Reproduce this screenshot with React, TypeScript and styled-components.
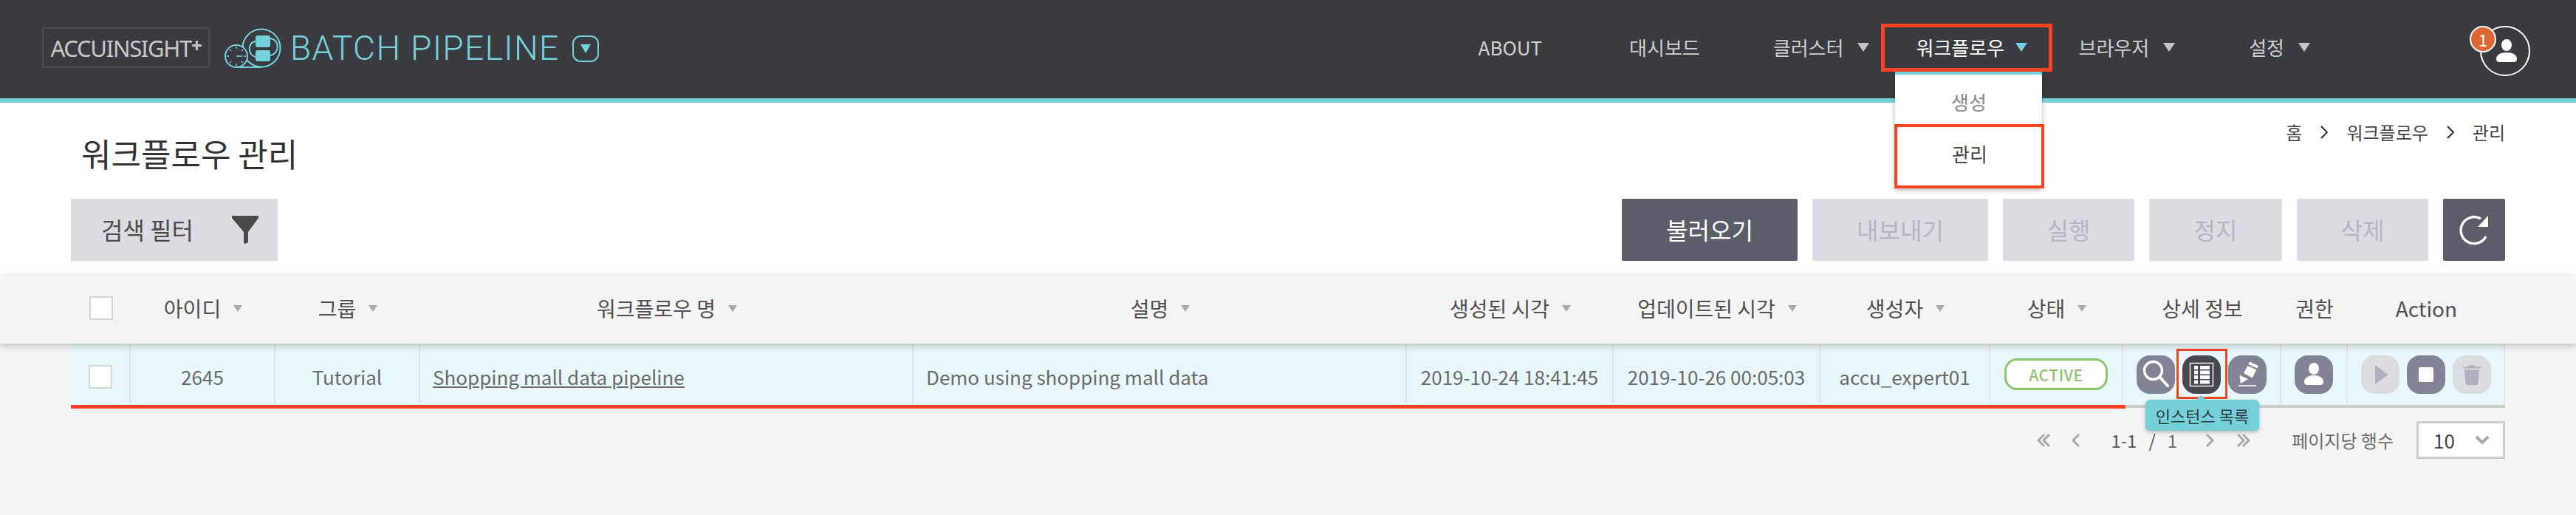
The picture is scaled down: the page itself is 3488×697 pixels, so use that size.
import styled, { createGlobalStyle } from 'styled-components';

const GlobalStyle = createGlobalStyle`
    html, body {
        margin: 0;
        padding: 0;
        background: #f4f4f4;
        overflow: hidden;
    }
    * {
        box-sizing: border-box;
    }
`;

const FONT = `"Noto Sans CJK KR", "Noto Sans", sans-serif`;
const RED = '#f64421';
const TEAL = '#76d2da';
const COLUMNS = '81px 196px 196px 668px 668px 280px 280px 230px 180px 214px 90px 213px';

const Page = styled.div`
    width: 3488px;
    height: 697px;
    overflow: hidden;
    background: #f4f4f4;
    font-family: ${FONT};
`;

const TopBar = styled.header`
    height: 139px;
    display: flex;
    align-items: center;
    padding: 0 62px 0 57px;
    background: #3a3b40;
    border-bottom: 6px solid ${TEAL};
`;

const BrandBox = styled.div`
    width: 227px;
    height: 55px;
    margin-top: -4px;
    display: flex;
    align-items: center;
    justify-content: center;
    border: 2px solid #4a4c53;
    border-radius: 3px;
    color: #c8c8c8;
    font-family: "Noto Sans", sans-serif;
    font-size: 31px;
    letter-spacing: -1.3px;
    white-space: nowrap;
    sup {
        font-size: 26px;
        font-weight: 700;
        line-height: 0;
        position: relative;
        top: -4px;
        vertical-align: baseline;
    }
`;

const LogoMark = styled.svg`
    width: 78px;
    height: 54px;
    margin: -4px 0 0 20px;
    flex: none;
`;

const ProductName = styled.div`
    margin: -4px 0 0 11px;
    color: ${TEAL};
    font-family: Roboto, sans-serif;
    font-weight: 300;
    font-size: 46px;
    letter-spacing: 1.4px;
    line-height: 54px;
    white-space: nowrap;
`;

const ProductToggle = styled.div`
    width: 36px;
    height: 36px;
    margin: -2px 0 0 17px;
    display: flex;
    align-items: center;
    justify-content: center;
    border: 2px solid ${TEAL};
    border-radius: 11px;
`;

const Caret = styled.span<{ $color: string; $w: number; $h: number }>`
    display: inline-block;
    flex: none;
    width: 0;
    height: 0;
    border-left: ${(p) => p.$w / 2}px solid transparent;
    border-right: ${(p) => p.$w / 2}px solid transparent;
    border-top: ${(p) => p.$h}px solid ${(p) => p.$color};
`;

const Nav = styled.nav`
    margin: -4px 0 0 auto;
    display: flex;
    align-items: center;
`;

const NavItem = styled.div<{ $gap: number }>`
    margin-left: ${(p) => p.$gap}px;
    padding-bottom: 2px;
    display: flex;
    align-items: center;
    gap: 19px;
    color: #cfcfcf;
    font-size: 26px;
    line-height: 40px;
    white-space: nowrap;
`;

const ActiveNavItem = styled(NavItem)`
    position: relative;
    width: 232px;
    height: 65px;
    padding-left: 42px;
    gap: 15px;
    border: 5px solid ${RED};
    color: #ffffff;
`;

const Menu = styled.div`
    position: absolute;
    top: 60px;
    left: 14px;
    width: 199px;
    z-index: 5;
    background: #ffffff;
    border-top: 4px solid ${TEAL};
    box-shadow: 0 2px 6px rgba(0, 0, 0, 0.3);
    text-align: center;
    font-size: 26px;
`;

const MenuItem = styled.div`
    height: 67px;
    padding-top: 6px;
    display: flex;
    align-items: center;
    justify-content: center;
    color: #8a8a8a;
`;

const MenuItemMarked = styled.div`
    height: 87px;
    margin: 0 -3px 0 -1px;
    padding-bottom: 8px;
    display: flex;
    align-items: center;
    justify-content: center;
    border: 4px solid ${RED};
    background: #ffffff;
    color: #444444;
`;

const Avatar = styled.div`
    position: relative;
    width: 68px;
    height: 68px;
    margin: 4px 0 0 230px;
    border: 2px solid #ffffff;
    border-radius: 50%;
    svg {
        display: block;
        width: 64px;
        height: 64px;
    }
`;

const Badge = styled.span`
    position: absolute;
    top: -2px;
    left: -16px;
    width: 36px;
    height: 36px;
    display: flex;
    align-items: center;
    justify-content: center;
    border: 2px solid #ffffff;
    border-radius: 50%;
    background: #dd6733;
    color: #ffffff;
    font-size: 22px;
    line-height: 1;
`;

const PageHead = styled.section`
    height: 233px;
    padding: 0 96px;
    background: #ffffff;
`;

const TitleRow = styled.div`
    height: 130px;
    display: flex;
    justify-content: space-between;
    align-items: flex-start;
`;

const Title = styled.h1`
    margin: 41px 0 0 14px;
    color: #333333;
    font-size: 44px;
    font-weight: 400;
    line-height: 54px;
`;

const Breadcrumb = styled.div`
    margin: 22px 0 0 0;
    display: flex;
    align-items: center;
    gap: 24px;
    color: #444444;
    font-size: 24px;
    line-height: 36px;
    svg {
        width: 12px;
        height: 20px;
    }
`;

const Toolbar = styled.div`
    height: 84px;
    display: flex;
    justify-content: space-between;
`;

const FilterButton = styled.button`
    width: 280px;
    height: 84px;
    padding: 0 25px 3px 41px;
    display: flex;
    align-items: center;
    justify-content: space-between;
    border: none;
    background: #dcdce2;
    color: #4c4c4c;
    font-family: ${FONT};
    font-size: 32px;
    svg {
        width: 38px;
        height: 40px;
        margin-top: 3px;
    }
`;

const ActionGroup = styled.div`
    display: flex;
    gap: 20px;
`;

const ToolButton = styled.button<{ $w: number; $on?: boolean }>`
    width: ${(p) => p.$w}px;
    height: 84px;
    padding: 0 0 3px;
    display: flex;
    align-items: center;
    justify-content: center;
    border: none;
    border-radius: 2px;
    background: ${(p) => (p.$on ? '#5b5e69' : '#dcdce2')};
    color: ${(p) => (p.$on ? '#ffffff' : '#b4b7c2')};
    font-family: ${FONT};
    font-size: 32px;
    svg {
        width: 44px;
        height: 44px;
        margin-top: 3px;
    }
`;

const TableHead = styled.div`
    position: relative;
    z-index: 1;
    height: 93px;
    padding: 0 96px;
    display: grid;
    grid-template-columns: ${COLUMNS};
    background: #f4f4f4;
    box-shadow: 0 3px 9px rgba(0, 0, 0, 0.22);
`;

const HeadCell = styled.div`
    padding-bottom: 3px;
    display: flex;
    align-items: center;
    justify-content: center;
    gap: 17px;
    color: #505050;
    font-size: 28px;
    white-space: nowrap;
`;

const Check = styled.span`
    display: block;
    width: 32px;
    height: 32px;
    background: #ffffff;
    border: 2px solid #d4d4d4;
`;

const Row = styled.div`
    position: relative;
    height: 87px;
    margin: 0 96px;
    display: grid;
    grid-template-columns: ${COLUMNS};
    background: #e8f7f9;
    border-bottom: 4px solid #cccccc;
`;

const RowMark = styled.div`
    position: absolute;
    left: 0;
    top: 83px;
    width: 2782px;
    height: 5px;
    background: ${RED};
`;

const Cell = styled.div<{ $left?: boolean }>`
    display: flex;
    align-items: center;
    justify-content: ${(p) => (p.$left ? 'flex-start' : 'center')};
    gap: 10px;
    padding: 6px 0 0 ${(p) => (p.$left ? '17px' : '0')};
    border-right: 2px solid #e0e5e7;
    color: #6a6a6a;
    font-size: 26px;
    white-space: nowrap;
    &:last-child {
        border-right: none;
    }
`;

const RowLink = styled.a`
    color: #6a6a6a;
    text-decoration: underline;
`;

const StatusPill = styled.span`
    width: 140px;
    height: 43px;
    margin-top: -6px;
    display: flex;
    align-items: center;
    justify-content: center;
    border: 3px solid #8cc66c;
    border-radius: 17px;
    background: #ffffff;
    color: #8cc66c;
    font-size: 21px;
    font-weight: 500;
    letter-spacing: 0.5px;
`;

const IconButton = styled.span<{ $tone: 'normal' | 'active' | 'off' }>`
    position: relative;
    width: 52px;
    height: 52px;
    margin-top: -6px;
    border-radius: 18px;
    background: ${(p) => (p.$tone === 'active' ? '#47484f' : p.$tone === 'off' ? '#dcdde3' : '#808494')};
    svg {
        display: block;
        width: 52px;
        height: 52px;
    }
`;

const IconMark = styled.span`
    position: absolute;
    top: -9px;
    left: -8px;
    width: 69px;
    height: 68px;
    border: 3px solid ${RED};
`;

const Tooltip = styled.div`
    position: absolute;
    z-index: 3;
    top: 60px;
    left: -50px;
    width: 154px;
    height: 42px;
    display: flex;
    align-items: center;
    justify-content: center;
    border-radius: 6px;
    background: #76d0da;
    box-shadow: 0 2px 5px rgba(0, 0, 0, 0.25);
    color: #2f3a3c;
    font-size: 22px;
    &::before {
        content: '';
        position: absolute;
        top: -6px;
        left: 68px;
        border-left: 7px solid transparent;
        border-right: 7px solid transparent;
        border-bottom: 6px solid #76d0da;
    }
`;

const Pager = styled.div`
    height: 51px;
    margin: 18px 96px 0 0;
    display: flex;
    align-items: center;
    justify-content: flex-end;
    color: #555555;
    font-size: 24px;
    line-height: 1;
`;

const PagerArrow = styled.svg<{ $gap: number }>`
    width: 18px;
    height: 20px;
    margin-left: ${(p) => p.$gap}px;
    flex: none;
`;

const PagerText = styled.span<{ $gap: number; $soft?: boolean }>`
    margin-left: ${(p) => p.$gap}px;
    color: ${(p) => (p.$soft ? '#6c6c6c' : '#555555')};
    white-space: nowrap;
`;

const PageLabel = styled.span`
    margin-left: 56px;
    color: #6c6c6c;
    font-size: 24px;
    white-space: nowrap;
`;

const PageSize = styled.div`
    width: 120px;
    height: 51px;
    margin-left: 31px;
    padding: 0 18px 0 20px;
    display: flex;
    align-items: center;
    justify-content: space-between;
    border: 3px solid #cccccc;
    background: #ffffff;
    color: #444444;
    font-size: 26px;
    svg {
        width: 20px;
        height: 14px;
    }
`;

const Chevron = () => (
    <svg viewBox="0 0 12 20">
        <path d="M2 2l8 8-8 8" fill="none" stroke="#222" strokeWidth="1.8" />
    </svg>
);

const Tri = () => <Caret $color="#aaaaaa" $w={13} $h={9} />;

const Head = ({ label }: { label: string }) => (
    <HeadCell>
        {label}
        <Tri />
    </HeadCell>
);

const PagerIcon = ({ d, gap }: { d: string; gap: number }) => (
    <PagerArrow $gap={gap} viewBox="0 0 18 20">
        <path d={d} fill="none" stroke="#a9a9a9" strokeWidth="3" />
    </PagerArrow>
);

export default function App() {
    return (
        <Page>
            <GlobalStyle />
            <TopBar>
                <BrandBox>
                    ACCUINSIGHT<sup>+</sup>
                </BrandBox>
                <LogoMark viewBox="0 0 78 54">
                    <g fill="none" stroke={TEAL} strokeWidth="2">
                        <circle cx="50" cy="27" r="25.5" />
                        <path d="M62 14c13 1 13 21 0 23" />
                        <path d="M42 18c-11 1-11 19 0 21" />
                        <circle cx="16" cy="38" r="15" fill="#3a3b40" />
                        <path d="M16 53h34" />
                        <path d="M16 38h8M16 25v3M16 48v3M3 38h3M26 38h3M7 29l2 2M25 29l-2 2M7 47l2-2M25 47l-2-2" strokeWidth="1.4" />
                    </g>
                    <rect x="42" y="10" width="20" height="16" rx="3" fill={TEAL} />
                    <rect x="42" y="30" width="20" height="15" rx="3" fill={TEAL} />
                </LogoMark>
                <ProductName>BATCH PIPELINE</ProductName>
                <ProductToggle>
                    <Caret $color={TEAL} $w={14} $h={12} />
                </ProductToggle>
                <Nav>
                    <NavItem $gap={0}>ABOUT</NavItem>
                    <NavItem $gap={118}>대시보드</NavItem>
                    <NavItem $gap={99}>
                        클러스터 <Caret $color="#c4c4c4" $w={17} $h={12} />
                    </NavItem>
                    <ActiveNavItem $gap={16}>
                        워크플로우 <Caret $color={TEAL} $w={17} $h={12} />
                        <Menu>
                            <MenuItem>생성</MenuItem>
                            <MenuItemMarked>관리</MenuItemMarked>
                        </Menu>
                    </ActiveNavItem>
                    <NavItem $gap={35}>
                        브라우저 <Caret $color="#c4c4c4" $w={17} $h={12} />
                    </NavItem>
                    <NavItem $gap={100}>
                        설정 <Caret $color="#c4c4c4" $w={17} $h={12} />
                    </NavItem>
                </Nav>
                <Avatar>
                    <svg viewBox="0 0 64 64">
                        <ellipse cx="34" cy="24" rx="7" ry="8" fill="#fff" />
                        <path d="M20 43c0-6 6-9 14-9s14 3 14 9c0 3-2 4-4 4H24c-2 0-4-1-4-4z" fill="#fff" />
                    </svg>
                    <Badge>1</Badge>
                </Avatar>
            </TopBar>

            <PageHead>
                <TitleRow>
                    <Title>워크플로우 관리</Title>
                    <Breadcrumb>
                        <span>홈</span>
                        <Chevron />
                        <span>워크플로우</span>
                        <Chevron />
                        <span>관리</span>
                    </Breadcrumb>
                </TitleRow>
                <Toolbar>
                    <FilterButton>
                        검색 필터
                        <svg viewBox="0 0 38 40">
                            <path d="M1 1h36v3L23 23v14l-4 2-2-1V23L1 4z" fill="#4a4a4a" />
                        </svg>
                    </FilterButton>
                    <ActionGroup>
                        <ToolButton $w={238} $on>불러오기</ToolButton>
                        <ToolButton $w={238}>내보내기</ToolButton>
                        <ToolButton $w={178}>실행</ToolButton>
                        <ToolButton $w={180}>정지</ToolButton>
                        <ToolButton $w={178}>삭제</ToolButton>
                        <ToolButton $w={84} $on>
                            <svg viewBox="0 0 44 44">
                                <path d="M38 31a18 18 0 1 1-7-24" fill="none" stroke="#fff" strokeWidth="3.4" />
                                <path d="M41 3v15H27z" fill="#fff" />
                            </svg>
                        </ToolButton>
                    </ActionGroup>
                </Toolbar>
            </PageHead>

            <TableHead>
                <HeadCell>
                    <Check />
                </HeadCell>
                <Head label="아이디" />
                <Head label="그룹" />
                <Head label="워크플로우 명" />
                <Head label="설명" />
                <Head label="생성된 시각" />
                <Head label="업데이트된 시각" />
                <Head label="생성자" />
                <Head label="상태" />
                <HeadCell>상세 정보</HeadCell>
                <HeadCell>권한</HeadCell>
                <HeadCell>Action</HeadCell>
            </TableHead>

            <Row>
                <Cell>
                    <Check />
                </Cell>
                <Cell>2645</Cell>
                <Cell>Tutorial</Cell>
                <Cell $left>
                    <RowLink>Shopping mall data pipeline</RowLink>
                </Cell>
                <Cell $left>Demo using shopping mall data</Cell>
                <Cell>2019-10-24 18:41:45</Cell>
                <Cell>2019-10-26 00:05:03</Cell>
                <Cell>accu_expert01</Cell>
                <Cell>
                    <StatusPill>ACTIVE</StatusPill>
                </Cell>
                <Cell>
                    <IconButton $tone="normal">
                        <svg viewBox="0 0 52 52">
                            <circle cx="22.5" cy="20.5" r="12" fill="none" stroke="#fff" strokeWidth="3.4" />
                            <path d="M31 29l11 12" stroke="#fff" strokeWidth="4" strokeLinecap="round" />
                        </svg>
                    </IconButton>
                    <IconButton $tone="active">
                        <svg viewBox="0 0 52 52">
                            <rect x="10.5" y="10.5" width="31" height="31" fill="none" stroke="#fff" strokeWidth="1.4" />
                            <path d="M16 14h5v5h-5zM24 14h13v5H24zM16 20.5h5v5h-5zM24 20.5h13v5H24zM16 27h5v5h-5zM24 27h13v5H24zM16 33.5h5v5h-5zM24 33.5h13v5H24z" fill="#fff" />
                        </svg>
                        <IconMark />
                        <Tooltip>인스턴스 목록</Tooltip>
                    </IconButton>
                    <IconButton $tone="normal">
                        <svg viewBox="0 0 52 52">
                            <path d="M17 38l-1.6-11.3 11.8 5.4zM20.9 24l5.5-10 11.8 5.4-5.5 11zM27.4 12l1.8-3.4 11.8 5.4-1.8 3.4z" fill="#fff" />
                            <path d="M14 41h24" stroke="#fff" strokeWidth="1.6" />
                        </svg>
                    </IconButton>
                </Cell>
                <Cell>
                    <IconButton $tone="normal">
                        <svg viewBox="0 0 52 52">
                            <ellipse cx="26" cy="18" rx="7" ry="8" fill="#fff" />
                            <path d="M13 36c0-6 6-9 13-9s13 3 13 9c0 3-2 4-4 4H17c-2 0-4-1-4-4z" fill="#fff" />
                        </svg>
                    </IconButton>
                </Cell>
                <Cell>
                    <IconButton $tone="off">
                        <svg viewBox="0 0 52 52">
                            <path d="M20 15l15 11-15 11z" fill="#aeb1be" stroke="#aeb1be" strokeWidth="2" strokeLinejoin="round" />
                        </svg>
                    </IconButton>
                    <IconButton $tone="normal">
                        <svg viewBox="0 0 52 52">
                            <rect x="16" y="16" width="20" height="20" rx="2" fill="#fff" />
                        </svg>
                    </IconButton>
                    <IconButton $tone="off">
                        <svg viewBox="0 0 52 52">
                            <path d="M14 15.5h7l1-2h8l1 2h7v2H14zM16 19.5h20l-1.5 18.5c0 1-1 2-2 2h-13c-1 0-2-1-2-2z" fill="#aeb1be" />
                        </svg>
                    </IconButton>
                </Cell>
                <RowMark />
            </Row>

            <Pager>
                <PagerIcon gap={0} d="M10 2L2 10l8 8M17 2l-8 8 8 8" />
                <PagerIcon gap={27} d="M12 2l-8 8 8 8" />
                <PagerText $gap={37}>1-1</PagerText>
                <PagerText $gap={16}>/</PagerText>
                <PagerText $gap={16} $soft>1</PagerText>
                <PagerIcon gap={35} d="M5 2l8 8-8 8" />
                <PagerIcon gap={28} d="M1 2l8 8-8 8M8 2l8 8-8 8" />
                <PageLabel>페이지당 행수</PageLabel>
                <PageSize>
                    10
                    <svg viewBox="0 0 20 14">
                        <path d="M2 2l8 8 8-8" fill="none" stroke="#a9a9a9" strokeWidth="4" />
                    </svg>
                </PageSize>
            </Pager>
        </Page>
    );
}
